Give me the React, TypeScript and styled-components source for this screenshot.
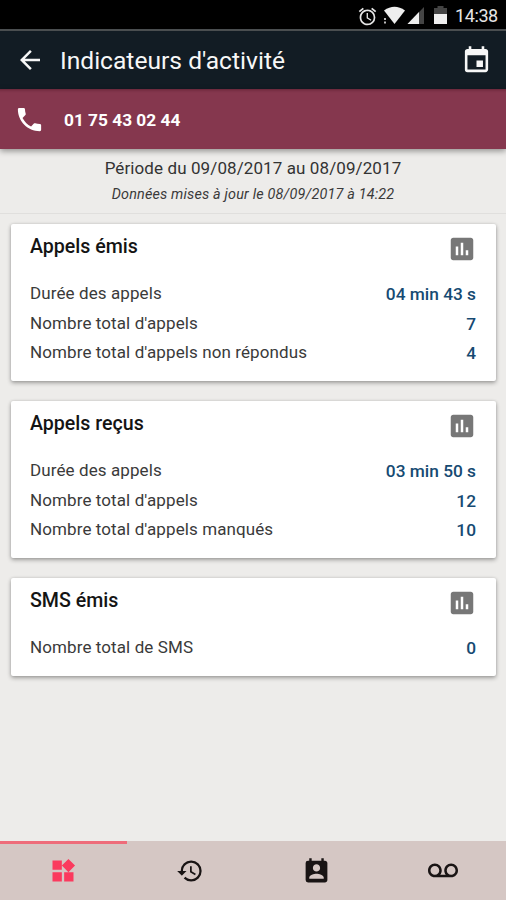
import React from "react";
import styled, { createGlobalStyle } from "styled-components";
import {
  MdAccessAlarm,
  MdArrowBack,
  MdEvent,
  MdPhone,
  MdAssessment,
  MdWidgets,
  MdHistory,
  MdPermContactCalendar,
  MdVoicemail,
} from "react-icons/md";

const GlobalStyle = createGlobalStyle`
  * { box-sizing: border-box; }
  body { margin: 0; background: #edecea; }
`;

const Screen = styled.div`
  width: 506px;
  height: 900px;
  display: flex;
  flex-direction: column;
  overflow: hidden;
  background: #edecea;
  font-family: Roboto, "Liberation Sans", sans-serif;
  color: #1c1c1c;
`;

const StatusBar = styled.div`
  flex: none;
  height: 31px;
  display: flex;
  align-items: center;
  justify-content: flex-end;
  padding: 3px 7px 0 0;
  background: #000;
  border-bottom: 2px solid #4a4e50;
  color: #e6e6e6;

  svg { display: block; flex: none; }
`;

const Clock = styled.span`
  width: 43px;
  margin-left: 8px;
  margin-right: 1px;
  font-size: 18px;
  line-height: 22px;
  letter-spacing: -0.4px;
  white-space: nowrap;
`;

const AppBar = styled.header`
  flex: none;
  height: 58px;
  display: flex;
  align-items: center;
  padding: 0 14px 0 15px;
  background: #121c24;
  color: #f7f7f7;
`;

const Title = styled.h1`
  flex: 1;
  margin: 1px 0 0 15px;
  font-size: 24.6px;
  line-height: 30px;
  font-weight: 400;
`;

const PhoneBar = styled.div`
  flex: none;
  position: relative;
  height: 60px;
  display: flex;
  align-items: center;
  padding-left: 14px;
  background: #85374e;
  color: #fff;
  box-shadow: inset 0 4px 3px -3px rgba(60, 10, 25, 0.45), 0 2px 6px rgba(0, 0, 0, 0.4);
`;

const PhoneNumber = styled.span`
  margin: 2px 0 0 19px;
  font-size: 17.3px;
  line-height: 22px;
  font-weight: 700;
`;

const Period = styled.section`
  flex: none;
  height: 65px;
  padding-top: 7px;
  border-bottom: 1px solid #e0dfdd;
  text-align: center;
`;

const PeriodRange = styled.p`
  margin: 0;
  font-size: 17px;
  line-height: 24px;
  letter-spacing: 0.1px;
  color: #333;
`;

const UpdatedAt = styled.p`
  margin: 3px 0 0;
  font-size: 14.4px;
  line-height: 24px;
  letter-spacing: 0.17px;
  font-style: italic;
  color: #3a3a3a;
`;

const Cards = styled.main`
  flex: 1;
  display: flex;
  flex-direction: column;
  gap: 20px;
  padding: 10px 10px 0 11px;
`;

const Card = styled.section`
  padding: 9px 20px 13.5px 19px;
  background: #fff;
  border-radius: 2px;
  box-shadow: 0 2px 4px rgba(0, 0, 0, 0.32), 0 0 3px rgba(0, 0, 0, 0.12);
`;

const CardHeader = styled.div`
  height: 46px;
  display: flex;
  justify-content: space-between;
  color: #777;
`;

const CardTitle = styled.h2`
  margin: 0;
  font-size: 19.6px;
  line-height: 27px;
  font-weight: 500;
  color: #141414;
`;

const CardIcon = styled.span`
  width: 30px;
  height: 30px;
  margin-right: -1px;
  padding-top: 0.5px;

  svg { display: block; }
`;

const Row = styled.div`
  height: 29.5px;
  display: flex;
  justify-content: space-between;
  line-height: 29px;
`;

const Label = styled.span`
  font-size: 17px;
  letter-spacing: 0.1px;
  color: #3a3a3a;
`;

const Value = styled.span`
  padding-top: 1px;
  font-size: 17.3px;
  font-weight: 500;
  color: #164a72;
`;

const TabBar = styled.nav`
  flex: none;
  height: 59px;
  display: grid;
  grid-template-columns: repeat(4, 1fr);
  background: #d5c7c4;
`;

const Tab = styled.div<{ $active?: boolean }>`
  display: flex;
  align-items: center;
  justify-content: center;
  padding-bottom: 2px;
  border-top: 3px solid ${(p) => (p.$active ? "#ee6c7a" : "transparent")};
  color: ${(p) => (p.$active ? "#fb3a5e" : "#191414")};
`;

const groups = [
  {
    title: "Appels émis",
    rows: [
      ["Durée des appels", "04 min 43 s"],
      ["Nombre total d'appels", "7"],
      ["Nombre total d'appels non répondus", "4"],
    ],
  },
  {
    title: "Appels reçus",
    rows: [
      ["Durée des appels", "03 min 50 s"],
      ["Nombre total d'appels", "12"],
      ["Nombre total d'appels manqués", "10"],
    ],
  },
  { title: "SMS émis", rows: [["Nombre total de SMS", "0"]] },
];

const StatusIcons = () => (
  <>
    <MdAccessAlarm size={21} />
    <svg width="56" height="20" viewBox="0 0 56 20">
      <path d="M6 4.500Q16.500-3 27 4.500L16.500 18Z" fill="#eee" />
      <path d="M7 12v2M7 15.500v2" stroke="#bbb" strokeWidth="2" />
      <path d="M46 1v17H29.500Z" fill="#444" />
      <path d="M41 6v12H29.500Z" fill="#eee" />
    </svg>
    <svg width="13" height="20" viewBox="0 0 13 20">
      <path d="M3.500 0h6v2H13v6H0V2h3.500Z" fill="#444" />
      <path d="M0 8h13v10H0Z" fill="#eee" />
    </svg>
  </>
);

export default function App() {
  return (
    <>
      <GlobalStyle />
      <Screen>
        <StatusBar>
          <StatusIcons />
          <Clock>14:38</Clock>
        </StatusBar>
        <AppBar>
          <MdArrowBack size={30} />
          <Title>Indicateurs d'activité</Title>
          <MdEvent size={31} />
        </AppBar>
        <PhoneBar>
          <MdPhone size={31} />
          <PhoneNumber>01 75 43 02 44</PhoneNumber>
        </PhoneBar>
        <Period>
          <PeriodRange>Période du 09/08/2017 au 08/09/2017</PeriodRange>
          <UpdatedAt>Données mises à jour le 08/09/2017 à 14:22</UpdatedAt>
        </Period>
        <Cards>
          {groups.map((group) => (
            <Card key={group.title}>
              <CardHeader>
                <CardTitle>{group.title}</CardTitle>
                <CardIcon>
                  <MdAssessment size={30} />
                </CardIcon>
              </CardHeader>
              {group.rows.map(([label, value]) => (
                <Row key={label}>
                  <Label>{label}</Label>
                  <Value>{value}</Value>
                </Row>
              ))}
            </Card>
          ))}
        </Cards>
        <TabBar>
          <Tab $active>
            <MdWidgets size={28} />
          </Tab>
          <Tab>
            <MdHistory size={28} />
          </Tab>
          <Tab>
            <MdPermContactCalendar size={29} />
          </Tab>
          <Tab>
            <MdVoicemail size={30} />
          </Tab>
        </TabBar>
      </Screen>
    </>
  );
}
